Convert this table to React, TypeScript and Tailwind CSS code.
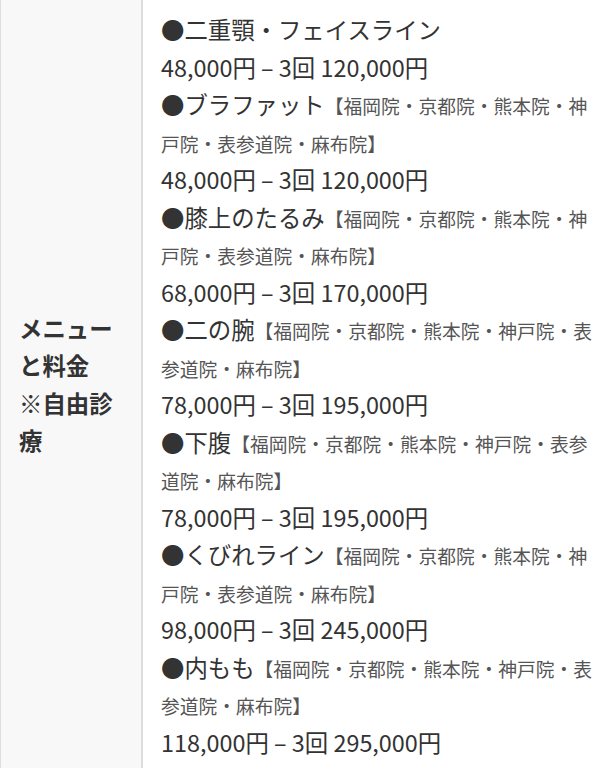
import React from "react";

const items: { name: string; note?: string; price: string }[] = [
  { name: "●二重顎・フェイスライン", price: "48,000円 – 3回 120,000円" },
  { name: "●ブラファット", note: "【福岡院・京都院・熊本院・神戸院・表参道院・麻布院】", price: "48,000円 – 3回 120,000円" },
  { name: "●膝上のたるみ", note: "【福岡院・京都院・熊本院・神戸院・表参道院・麻布院】", price: "68,000円 – 3回 170,000円" },
  { name: "●二の腕", note: "【福岡院・京都院・熊本院・神戸院・表参道院・麻布院】", price: "78,000円 – 3回 195,000円" },
  { name: "●下腹", note: "【福岡院・京都院・熊本院・神戸院・表参道院・麻布院】", price: "78,000円 – 3回 195,000円" },
  { name: "●くびれライン", note: "【福岡院・京都院・熊本院・神戸院・表参道院・麻布院】", price: "98,000円 – 3回 245,000円" },
  { name: "●内もも", note: "【福岡院・京都院・熊本院・神戸院・表参道院・麻布院】", price: "118,000円 – 3回 295,000円" },
];

export default function App() {
  return (
    <div
      className="w-[616px] h-[768px] overflow-hidden bg-white text-[#333]"
      style={{ fontFamily: '"Noto Sans CJK JP", "Noto Sans", sans-serif' }}
    >
      <div className="flex w-full">
        <div className="w-[143px] shrink-0 border-l border-r-2 border-[#dddddd] bg-[#f8f8f8] px-[18px] flex items-center">
          <div className="text-[23.4px] leading-[37.5px] font-bold text-[#333]">
            メニューと料金
            <br />
            ※自由診療
          </div>
        </div>
        <div className="flex-1 pl-[18px] pr-[16px] pt-[11px] pb-[8px] text-[23.4px] leading-[37.5px]">
          {items.map((it, i) => (
            <React.Fragment key={i}>
              {it.name}
              {it.note && <span className="text-[18.75px] leading-none text-[#555]">{it.note}</span>}
              <br />
              {it.price}
              <br />
            </React.Fragment>
          ))}
        </div>
      </div>
    </div>
  );
}
